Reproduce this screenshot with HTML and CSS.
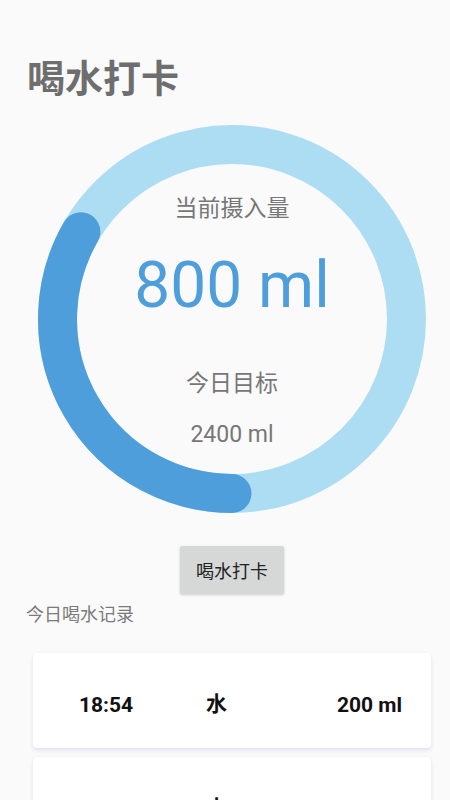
FILE: index.html
```html
<!DOCTYPE html>
<html lang="zh-CN">
<head>
<meta charset="utf-8">
<title>喝水打卡</title>
<link rel="stylesheet" href="styles.css">
</head>
<body>
<div class="page">
  <h1 class="title">喝水打卡</h1>
  <div class="ring">
    <svg class="ring-svg" width="388" height="388" viewBox="0 0 388 388">
      <circle cx="194" cy="194" r="174.5" fill="none" stroke="#ADDDF2" stroke-width="39"/>
      <path d="M194 368.5 A174.5 174.5 0 0 1 42.88 106.75" fill="none" stroke="#4F9EDC" stroke-width="39" stroke-linecap="round"/>
    </svg>
    <div class="ring-label">当前摄入量</div>
    <div class="ring-value">800 ml</div>
    <div class="ring-goal-label">今日目标</div>
    <div class="ring-goal">2400 ml</div>
  </div>
  <button class="checkin">喝水打卡</button>
  <div class="section">今日喝水记录</div>
  <div class="records">
    <div class="card">
      <span class="time">18:54</span>
      <span class="kind">水</span>
      <span class="amount">200 ml</span>
    </div>
    <div class="card">
      <span class="time">18:54</span>
      <span class="kind">水</span>
      <span class="amount">200 ml</span>
    </div>
  </div>
</div>
</body>
</html>
```
FILE: styles.css
```css
html, body {
  margin: 0;
  padding: 0;
  background: #FAFAFA;
}
body {
  font-family: Roboto, "Noto Sans CJK SC", sans-serif;
  overflow: hidden;
  height: 800px;
}
.page {
  display: flex;
  flex-direction: column;
}
.title {
  margin: 0;
  padding: 52px 0 0 27px;
  font-size: 38px;
  line-height: 48px;
  font-weight: bold;
  color: #6E6E6E;
  font-family: "Noto Sans CJK SC", sans-serif;
}
.ring {
  position: relative;
  width: 388px;
  height: 388px;
  margin: 25px 0 0 38px;
  display: flex;
  flex-direction: column;
  align-items: center;
}
.ring-svg {
  position: absolute;
  left: 0;
  top: 0;
}
.ring-label, .ring-goal-label {
  position: relative;
  font-family: "Noto Sans CJK SC", sans-serif;
  font-size: 23px;
  line-height: 30px;
  color: #777777;
}
.ring-label {
  margin-top: 66px;
}
.ring-value {
  position: relative;
  margin-top: 25px;
  font-size: 64px;
  line-height: 80px;
  color: #4F9EDC;
}
.ring-goal-label {
  margin-top: 40px;
}
.ring-goal {
  position: relative;
  margin-top: 24px;
  font-size: 23px;
  line-height: 30px;
  color: #777777;
}
.checkin {
  align-self: flex-start;
  margin: 33px 0 0 180px;
  width: 104px;
  height: 48px;
  border: none;
  border-radius: 2px;
  background: #D6D7D7;
  box-shadow: 0 1px 3px rgba(0,0,0,0.18);
  font-family: "Noto Sans CJK SC", sans-serif;
  font-size: 18px;
  color: #222222;
  padding: 0;
}
.section {
  margin: 7px 0 0 26px;
  font-family: "Noto Sans CJK SC", sans-serif;
  font-size: 18px;
  line-height: 24px;
  color: #7A7A7A;
}
.records {
  display: flex;
  flex-direction: column;
  gap: 9px;
  margin: 28px 0 0 33px;
  width: 398px;
}
.card {
  flex: none;
  box-sizing: border-box;
  height: 95px;
  background: #FFFFFF;
  border-radius: 4px;
  box-shadow: 0 2px 4px rgba(90, 80, 170, 0.16);
  display: grid;
  grid-template-columns: 127px 1fr auto;
  align-items: center;
  padding: 9px 29px 0 46px;
  font-size: 21px;
  line-height: 24px;
  font-weight: bold;
  color: #111111;
}
.kind {
  font-family: "Noto Sans CJK SC", sans-serif;
  position: relative;
  top: -3px;
}
```
